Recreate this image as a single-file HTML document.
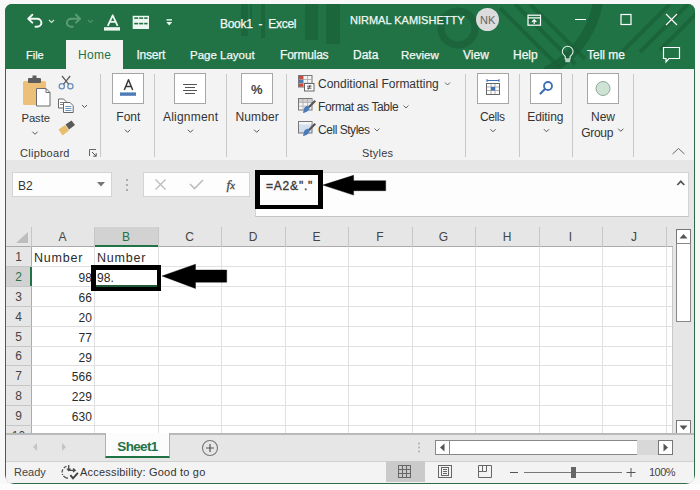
<!DOCTYPE html>
<html><head><meta charset="utf-8">
<style>
*{margin:0;padding:0;box-sizing:border-box;}
html,body{width:700px;height:490px;overflow:hidden;background:#f8f8f8;font-family:"Liberation Sans",sans-serif;}
.a{position:absolute;}
.t{position:absolute;white-space:nowrap;line-height:1;}
#win{position:absolute;left:0;top:0;width:700px;height:490px;clip-path:inset(4px 5px 6px 5px round 7px 7px 9px 9px);background:#2f6b4a;}
.wt{color:#f3f8f5;font-size:12px;-webkit-text-stroke:0.25px #f3f8f5;}
.rb{color:#333;font-size:12px;}
.sep{position:absolute;width:1px;background:#c8c8c8;top:74px;height:83px;}
.ibox{position:absolute;width:32px;height:31px;top:73px;background:#fff;border:1px solid #a6a6a6;}
.chev{position:absolute;width:5px;height:5px;border-right:1px solid #555;border-bottom:1px solid #555;transform:rotate(45deg);}
.hl{position:absolute;background:#e1e1e1;}
.rh{position:absolute;left:6px;width:25px;height:20px;color:#444;font-size:12px;text-align:center;line-height:20px;}
.ch{position:absolute;top:227px;height:19px;color:#444;font-size:12px;text-align:center;line-height:20px;}
.cell{position:absolute;font-size:12.5px;color:#2a2a2a;line-height:22px;white-space:nowrap;letter-spacing:0.8px;}
.num{font-size:12px;letter-spacing:0.1px;}
</style></head><body>
<div class="a" style="left:0;top:484px;width:700px;height:6px;background:#fcfcfc;"></div>
<div id="win">
  <div class="a" style="left:0;top:0;width:700px;height:69px;background:#217346;"></div>
  <!-- title bar pattern -->
  <svg class="a" style="left:0;top:0" width="700" height="69">
    <g fill="#195e37" opacity="0.6">
      <rect x="241" y="4" width="7" height="32"/><rect x="250" y="4" width="2" height="26"/><rect x="261" y="4" width="4" height="34"/>
      <rect x="305" y="4" width="13" height="36"/><rect x="326" y="4" width="14" height="40"/>
    </g>
    <g fill="none" stroke="#195e37" opacity="0.7">
      <circle cx="458" cy="28" r="17" stroke-width="7"/>
      <path d="M598 2 Q590 48 546 72" stroke-width="10"/>
    </g>
    <g stroke="#195e37" stroke-width="4" opacity="0.65">
      <line x1="500" y1="8" x2="560" y2="68"/><line x1="515" y1="4" x2="575" y2="64"/><line x1="530" y1="4" x2="585" y2="59"/>
      <line x1="622" y1="52" x2="670" y2="4"/><line x1="640" y1="52" x2="688" y2="4"/><line x1="660" y1="50" x2="700" y2="10"/>
    </g>
  </svg>
  <!-- QAT -->
  <svg class="a" style="left:0;top:0" width="200" height="40" viewBox="0 0 200 40">
    <path d="M32.3 14.8 L28.3 18.7 L32.3 22.6" fill="none" stroke="#f2f8f4" stroke-width="2" stroke-linejoin="round" stroke-linecap="round"/>
    <path d="M28.8 18.7 H37 A4.4 4 0 0 1 37 26.7 H35.5" fill="none" stroke="#f2f8f4" stroke-width="2" stroke-linecap="round"/>
    <path d="M49 20 L51.5 22.5 L54 20" fill="none" stroke="#cfe3d7" stroke-width="1.1"/>
    <path d="M76 14.8 L80 18.7 L76 22.6" fill="none" stroke="#5c9c77" stroke-width="2" stroke-linejoin="round" stroke-linecap="round"/>
    <path d="M79.5 18.7 H71.3 A4.4 4 0 0 0 71.3 26.7 H72.8" fill="none" stroke="#5c9c77" stroke-width="2" stroke-linecap="round"/>
    <path d="M88 20 L90.5 22.5 L93 20" fill="none" stroke="#4f9070" stroke-width="1.1"/>
    <path d="M107.8 25.8 L112.7 15.3 L117.6 25.8 M109.6 21.8 H115.8" fill="none" stroke="#eef7f1" stroke-width="1.8" stroke-linejoin="round"/>
    <rect x="104" y="27.2" width="16" height="3.4" fill="#eef7f1"/>
    <rect x="132.7" y="15.8" width="16.3" height="13.2" fill="#eef7f1"/>
    <g fill="#217346"><rect x="134.2" y="17.3" width="4" height="1.6"/><rect x="139.2" y="17.3" width="4" height="1.6"/><rect x="144.2" y="17.3" width="3.4" height="1.6"/>
    <rect x="134.2" y="22.8" width="4" height="1.6"/><rect x="139.2" y="22.8" width="4" height="1.6"/><rect x="144.2" y="22.8" width="3.4" height="1.6"/></g>
    <rect x="166.5" y="19.2" width="5.5" height="1.4" fill="#eef7f1"/>
    <path d="M166.3 22 H172.2 L169.25 25.5 Z" fill="#eef7f1"/>
  </svg>
  <div class="t wt" style="left:220px;top:18px;font-size:12px;letter-spacing:-0.3px;">Book1&nbsp; -&nbsp; Excel</div>
  <div class="t wt" style="left:350px;top:15px;font-size:11px;">NIRMAL KAMISHETTY</div>
  <div class="a" style="left:476px;top:8px;width:23px;height:23px;border-radius:50%;background:#dcdcdc;"></div>
  <div class="t" style="left:480px;top:15px;font-size:11px;color:#666;">NK</div>
  <svg class="a" style="left:520px;top:8px" width="170" height="24" viewBox="520 8 170 24">
    <rect x="528" y="15.2" width="12.5" height="10" fill="none" stroke="#fff" stroke-width="1.2"/>
    <line x1="528" y1="17.8" x2="540.5" y2="17.8" stroke="#fff" stroke-width="1.2"/>
    <path d="M534.2 24 V19.8 M532 22 L534.2 19.8 L536.4 22" fill="none" stroke="#fff" stroke-width="1.2"/>
    <line x1="575" y1="19.5" x2="586" y2="19.5" stroke="#fff" stroke-width="1.2"/>
    <rect x="621" y="14.5" width="10" height="10" fill="none" stroke="#fff" stroke-width="1.2"/>
    <path d="M666 14 L677 25 M677 14 L666 25" stroke="#fff" stroke-width="1.2"/>
  </svg>
  <!-- tabs -->
  <div class="a" style="left:66px;top:40px;width:57px;height:29px;background:#f3f3f3;"></div>
  <div class="t wt" style="left:26px;top:49.5px;font-size:11px;">File</div>
  <div class="t" style="left:78px;top:49px;font-size:12px;color:#217346;letter-spacing:0.3px;">Home</div>
  <div class="t wt" style="left:136.5px;top:49px;letter-spacing:-0.25px;">Insert</div>
  <div class="t wt" style="left:190px;top:49.5px;font-size:11.5px;">Page Layout</div>
  <div class="t wt" style="left:280px;top:49px;letter-spacing:-0.2px;">Formulas</div>
  <div class="t wt" style="left:353px;top:49px;">Data</div>
  <div class="t wt" style="left:401px;top:49.5px;font-size:11.5px;">Review</div>
  <div class="t wt" style="left:463px;top:49px;">View</div>
  <div class="t wt" style="left:513px;top:49px;">Help</div>
  <svg class="a" style="left:555px;top:43px" width="130" height="22" viewBox="555 43 130 22">
    <path d="M565.3 59 V56.5 C563 54.5 562.3 53 562.3 51.7 A5.4 5.4 0 0 1 573.1 51.7 C573.1 53 572.4 54.5 570.1 56.5 V59 Z" fill="none" stroke="#e8f3ec" stroke-width="1.1"/>
    <rect x="565.3" y="59" width="4.8" height="3.2" fill="#b9d4c4"/>
    <path d="M663.5 47.5 H679.5 V58.5 H669 L666 62 V58.5 H663.5 Z" fill="none" stroke="#fff" stroke-width="1.2"/>
  </svg>
  <div class="t wt" style="left:587px;top:49px;">Tell me</div>

  <div class="a" style="left:6px;top:69px;width:688px;height:414px;background:#e6e6e6;"></div>
  <!-- ribbon -->
  <div class="a" style="left:6px;top:69px;width:688px;height:93px;background:#f3f3f3;border-bottom:1px solid #d8d8d8;"></div>
  <!-- clipboard group -->
  <svg class="a" style="left:15px;top:70px" width="85" height="70" viewBox="15 70 85 70">
    <rect x="23" y="81" width="23" height="24" rx="1.5" fill="#edc079"/>
    <rect x="28" y="78" width="13" height="5" rx="1" fill="#5d5d5d"/>
    <rect x="32.5" y="75.5" width="4" height="3" fill="#5d5d5d"/>
    <path d="M36.5 88.5 H46 L50 92.5 V106 H36.5 Z" fill="#fff" stroke="#6b6b6b" stroke-width="1"/>
    <path d="M46 88.5 V92.5 H50" fill="none" stroke="#6b6b6b" stroke-width="1"/>
    <!-- scissors -->
    <circle cx="61.8" cy="86.3" r="2.6" fill="none" stroke="#6a8fbb" stroke-width="1.3"/>
    <circle cx="70.4" cy="86.3" r="2.6" fill="none" stroke="#6a8fbb" stroke-width="1.3"/>
    <path d="M63.6 84.2 L70.2 76 M68.6 84.2 L62 76" stroke="#5a5a5a" stroke-width="1.2"/>
    <!-- copy -->
    <path d="M58.5 99 H63.5 L66 101.5 V108 H58.5 Z" fill="#fff" stroke="#666" stroke-width="1"/>
    <path d="M60 102.5 H63.5 M60 104.5 H63.5" stroke="#777" stroke-width="0.9"/>
    <path d="M63.5 102.5 H70 L73.2 105.7 V112.5 H63.5 Z" fill="#fff" stroke="#666" stroke-width="1"/>
    <path d="M65.3 106.5 H71.5 M65.3 108.5 H71.5 M65.3 110.5 H71.5" stroke="#5b86b8" stroke-width="0.9"/>
    <path d="M82 105 L84.5 107.5 L87 105" fill="none" stroke="#555" stroke-width="1"/>
    <!-- format painter -->
    <path d="M58.5 129.5 L65 125 L69 130.5 L62.5 135.5 Z" fill="#e9bd6e"/>
    <path d="M65.5 124.5 L71.5 120.5 L75 125 L69 129.5 Z" fill="#5a5a5a"/>
  </svg>
  <div class="t rb" style="left:21.5px;top:112.5px;font-size:11.3px;letter-spacing:-0.1px;">Paste</div>
  <div class="t rb" style="left:20px;top:148px;font-size:11px;color:#3a3a3a;letter-spacing:0.3px;">Clipboard</div>
  <svg class="a" style="left:88px;top:148px" width="10" height="10" viewBox="88 148 10 10"><path d="M89.5 156 V149.5 H96" fill="none" stroke="#666" stroke-width="1"/><path d="M92 152 L96.2 156.2 M96.2 153.2 V156.2 H93.2" fill="none" stroke="#555" stroke-width="1"/></svg>
  <div class="sep" style="left:100px;"></div>

  <!-- Font -->
  <div class="ibox" style="left:112px;"></div>
  <svg class="a" style="left:112px;top:73px" width="32" height="31"><path d="M12.3 17 L16.5 6.8 L20.7 17 M13.7 13.6 H19.3" fill="none" stroke="#3a3a3a" stroke-width="1.5" stroke-linejoin="round"/><rect x="8" y="19.4" width="16" height="3.4" fill="#4f7cb8"/></svg>
  <div class="t rb" style="left:116.3px;top:111px;">Font</div>
  <div class="sep" style="left:154px;"></div>

  <!-- Alignment -->
  <div class="ibox" style="left:174px;"></div>
  <svg class="a" style="left:174px;top:73px" width="32" height="31"><g stroke="#555" stroke-width="1"><line x1="9" y1="11.5" x2="23" y2="11.5"/><line x1="11" y1="14.5" x2="21" y2="14.5"/><line x1="9" y1="17.5" x2="23" y2="17.5"/><line x1="11" y1="20.5" x2="21" y2="20.5"/></g></svg>
  <div class="t rb" style="left:163px;top:111px;letter-spacing:0.2px;">Alignment</div>
  <div class="sep" style="left:226px;"></div>

  <!-- Number -->
  <div class="ibox" style="left:241px;"></div>
  <div class="t" style="left:251px;top:83px;font-size:13px;font-weight:bold;color:#444;letter-spacing:-0.5px;">%</div>
  <div class="t rb" style="left:235.4px;top:111px;letter-spacing:0.15px;">Number</div>
  <div class="sep" style="left:286px;"></div>

  <!-- Styles -->
  <svg class="a" style="left:296px;top:74px" width="20" height="64" viewBox="296 74 20 64">
    <rect x="298.5" y="75.5" width="13.5" height="11.5" fill="#f4f4f4" stroke="#777" stroke-width="1"/>
    <path d="M303 76 V87 M307.5 76 V87 M299 79.5 H312 M299 83.2 H312" stroke="#aaa" stroke-width="0.8"/>
    <rect x="299" y="76" width="4.3" height="3.3" fill="#cf4a3b"/>
    <rect x="299" y="79.8" width="4.3" height="3.2" fill="#4a7ab8"/>
    <rect x="299" y="83.5" width="4.3" height="3.3" fill="#cf4a3b"/>
    <rect x="304.5" y="83.5" width="9.5" height="7.5" fill="#fff" stroke="#666" stroke-width="1"/>
    <path d="M307 86.2 H311.5 M307 88.2 H311.5 M308.3 89.6 L310.2 84.8" stroke="#333" stroke-width="0.8"/>
    <rect x="298.5" y="98.5" width="13.5" height="11.5" fill="#f4f4f4" stroke="#777" stroke-width="1"/>
    <rect x="299" y="99" width="12.5" height="3" fill="#cfcfcf"/>
    <path d="M303 99 V110 M307.5 99 V110 M299 102.5 H312 M299 106.2 H312" stroke="#aaa" stroke-width="0.8"/>
    <path d="M308 106.5 L314.5 100 L316 101.5 L309.5 108 Z" fill="#555"/>
    <path d="M304 108.5 C305 106.5 307 105.5 308.5 106 L309.5 107.5 C309.5 110 307 112.5 303 113 Z" fill="#4a7ab8"/>
    <rect x="298.5" y="121.5" width="13.5" height="11.5" fill="#d3deee" stroke="#777" stroke-width="1"/>
    <rect x="299" y="122" width="12.5" height="2.5" fill="#f4f4f4"/>
    <path d="M308 129.5 L314.5 123 L316 124.5 L309.5 131 Z" fill="#555"/>
    <path d="M304 131.5 C305 129.5 307 128.5 308.5 129 L309.5 130.5 C309.5 133 307 135.5 303 136 Z" fill="#4a7ab8"/>
  </svg>
  <div class="t rb" style="left:318px;top:78px;">Conditional Formatting</div>
  <div class="t rb" style="left:318px;top:101px;letter-spacing:-0.37px;">Format as Table</div>
  <div class="t rb" style="left:318px;top:124px;letter-spacing:-0.46px;">Cell Styles</div>
  <svg class="a" style="left:370px;top:78px" width="90" height="60" viewBox="370 78 90 60">
    <path d="M445 82.5 L447.5 85 L450 82.5" fill="none" stroke="#666" stroke-width="1"/>
    <path d="M403.5 105.5 L406 108 L408.5 105.5" fill="none" stroke="#666" stroke-width="1"/>
    <path d="M374.5 128.5 L377 131 L379.5 128.5" fill="none" stroke="#666" stroke-width="1"/>
  </svg>
  <div class="t rb" style="left:362px;top:148px;font-size:11px;color:#3a3a3a;letter-spacing:0.2px;">Styles</div>
  <div class="sep" style="left:465px;"></div>

  <!-- Cells -->
  <div class="ibox" style="left:477px;"></div>
  <svg class="a" style="left:477px;top:73px" width="32" height="31"><rect x="9.5" y="10.5" width="13" height="11" fill="#fff" stroke="#666" stroke-width="1"/><g stroke="#999" stroke-width="0.8"><line x1="10" y1="14" x2="22" y2="14"/><line x1="10" y1="17.5" x2="22" y2="17.5"/><line x1="14" y1="11" x2="14" y2="21"/><line x1="18" y1="11" x2="18" y2="21"/></g><rect x="14" y="14" width="4" height="3.5" fill="#3f6fb6"/><path d="M10 7.5 H22 M10 6 V9 M22 6 V9" stroke="#3f6fb6" stroke-width="1"/></svg>
  <div class="t rb" style="left:480px;top:110.5px;letter-spacing:-0.4px;">Cells</div>
  <div class="sep" style="left:519px;"></div>

  <!-- Editing -->
  <div class="ibox" style="left:530px;"></div>
  <svg class="a" style="left:530px;top:73px" width="32" height="31"><circle cx="18" cy="13" r="4" fill="none" stroke="#3f6fb6" stroke-width="1.8"/><line x1="15" y1="16" x2="10.5" y2="20.5" stroke="#3f6fb6" stroke-width="2.2" stroke-linecap="round"/></svg>
  <div class="t rb" style="left:527.3px;top:110.5px;letter-spacing:-0.1px;">Editing</div>
  <div class="sep" style="left:572px;"></div>

  <!-- New Group -->
  <div class="ibox" style="left:587px;"></div>
  <svg class="a" style="left:587px;top:73px" width="32" height="31"><circle cx="16" cy="15.5" r="7" fill="#cfe3d5" stroke="#8fa89a" stroke-width="1"/></svg>
  <div class="t rb" style="left:591px;top:111px;">New</div>
  <div class="t rb" style="left:581.2px;top:126.5px;letter-spacing:-0.3px;">Group</div>
  <div class="sep" style="left:633px;"></div>
  <svg class="a" style="left:670px;top:146px" width="18" height="10"><path d="M2.5 8 L8.5 2.5 L14.5 8" fill="none" stroke="#666" stroke-width="1"/></svg>

  <svg class="a" style="left:0;top:120px" width="700" height="20" viewBox="0 120 700 20"><g fill="none" stroke="#555" stroke-width="1"><path d="M32.4 131.7 L35.0 134.3 L37.6 131.7"/><path d="M125.0 129.7 L127.6 132.3 L130.2 129.7"/><path d="M187.8 129.7 L190.4 132.3 L193.0 129.7"/><path d="M254.1 129.7 L256.7 132.3 L259.3 129.7"/><path d="M490.4 129.2 L493.0 131.8 L495.6 129.2"/><path d="M543.9 129.2 L546.5 131.8 L549.1 129.2"/><path d="M618.2 128.7 L620.8 131.3 L623.4 128.7"/></g></svg>
  <!-- formula bar region -->
  <div class="a" style="left:6px;top:160px;width:688px;height:67px;background:#e6e6e6;"></div>
  <div class="a" style="left:12px;top:172px;width:100px;height:25px;background:#fdfdfd;border:1px solid #d4d4d4;"></div>
  <div class="t" style="left:18px;top:180px;font-size:12px;color:#333;">B2</div>
  <svg class="a" style="left:97px;top:182px" width="9" height="5"><path d="M0 0 H8 L4 4.5 Z" fill="#777"/></svg>
  <svg class="a" style="left:125px;top:178px" width="4" height="14"><circle cx="2" cy="2" r="1" fill="#999"/><circle cx="2" cy="7" r="1" fill="#999"/><circle cx="2" cy="12" r="1" fill="#999"/></svg>
  <div class="a" style="left:143px;top:172px;width:107px;height:25px;background:#fdfdfd;border:1px solid #d4d4d4;"></div>
  <svg class="a" style="left:143px;top:172px" width="107" height="25" viewBox="143 172 107 25">
    <path d="M155.5 179.5 L165.5 189.5 M165.5 179.5 L155.5 189.5" stroke="#bdbdbd" stroke-width="1.4"/>
    <path d="M190 184 L194.5 188.5 L203 180" fill="none" stroke="#bdbdbd" stroke-width="1.6"/>
  </svg>
  <div class="t" style="left:226.5px;top:178px;font-family:'Liberation Serif',serif;font-style:italic;font-size:13.5px;color:#4a4a4a;-webkit-text-stroke:0.3px #4a4a4a;">f<span style="font-size:10.5px;letter-spacing:-0.5px;">x</span></div>
  <div class="a" style="left:255px;top:172px;width:434px;height:45px;background:#fdfdfd;border:1px solid #d4d4d4;border-bottom-color:#c4c4c4;"></div>
  <svg class="a" style="left:675px;top:178px" width="12" height="10"><path d="M2.3 7 L5.8 3.3 L9.3 7" fill="none" stroke="#555" stroke-width="1.7"/></svg>
  <div class="a" style="left:255px;top:170px;width:68px;height:39px;border:solid #000;border-width:5px 5px 4px 5px;"></div>
  <div class="t" style="left:266px;top:180px;font-size:12px;color:#3c3c3c;letter-spacing:0.8px;-webkit-text-stroke:0.35px #3c3c3c;">=A2&amp;"."</div>
  <svg class="a" style="left:320px;top:170px" width="70" height="30" viewBox="320 170 70 30"><path d="M322.8 185.1 L353.6 175.3 V180.7 H385.7 V190.7 H353.6 V195.1 Z" fill="#000" stroke="#000" stroke-width="0.4" stroke-linejoin="round"/></svg>

  <!-- column headers -->
  <div class="a" style="left:6px;top:227px;width:667px;height:20px;background:#e6e6e6;border-bottom:1px solid #ababab;"></div>
  <svg class="a" style="left:6px;top:227px" width="26" height="20"><path d="M22 5 V16 H10 Z" fill="#bdbdbd"/></svg>
  <div class="a" style="left:94px;top:227px;width:64px;height:20px;background:#d2d2d2;border-bottom:2px solid #217346;"></div>
  <div class="ch" style="left:31px;width:63px;color:#444;">A</div>
  <div class="ch" style="left:94px;width:64px;color:#217346;">B</div>
  <div class="ch" style="left:158px;width:63px;color:#444;">C</div>
  <div class="ch" style="left:221px;width:64px;color:#444;">D</div>
  <div class="ch" style="left:285px;width:63px;color:#444;">E</div>
  <div class="ch" style="left:348px;width:64px;color:#444;">F</div>
  <div class="ch" style="left:412px;width:63px;color:#444;">G</div>
  <div class="ch" style="left:475px;width:64px;color:#444;">H</div>
  <div class="ch" style="left:539px;width:63px;color:#444;">I</div>
  <div class="ch" style="left:602px;width:64px;color:#444;">J</div>
  <div class="a" style="left:31px;top:227px;width:1px;height:20px;background:#c6c6c6;"></div>
  <div class="a" style="left:94px;top:227px;width:1px;height:20px;background:#c6c6c6;"></div>
  <div class="a" style="left:158px;top:227px;width:1px;height:20px;background:#c6c6c6;"></div>
  <div class="a" style="left:221px;top:227px;width:1px;height:20px;background:#c6c6c6;"></div>
  <div class="a" style="left:285px;top:227px;width:1px;height:20px;background:#c6c6c6;"></div>
  <div class="a" style="left:348px;top:227px;width:1px;height:20px;background:#c6c6c6;"></div>
  <div class="a" style="left:412px;top:227px;width:1px;height:20px;background:#c6c6c6;"></div>
  <div class="a" style="left:475px;top:227px;width:1px;height:20px;background:#c6c6c6;"></div>
  <div class="a" style="left:539px;top:227px;width:1px;height:20px;background:#c6c6c6;"></div>
  <div class="a" style="left:602px;top:227px;width:1px;height:20px;background:#c6c6c6;"></div>
  <div class="a" style="left:666px;top:227px;width:1px;height:20px;background:#c6c6c6;"></div>
  <!-- grid -->
  <div class="a" style="left:31px;top:247px;width:641px;height:186px;background:#fff;"></div>
  <div class="hl" style="left:94px;top:247px;width:1px;height:186px;"></div>
  <div class="hl" style="left:158px;top:247px;width:1px;height:186px;"></div>
  <div class="hl" style="left:221px;top:247px;width:1px;height:186px;"></div>
  <div class="hl" style="left:285px;top:247px;width:1px;height:186px;"></div>
  <div class="hl" style="left:348px;top:247px;width:1px;height:186px;"></div>
  <div class="hl" style="left:412px;top:247px;width:1px;height:186px;"></div>
  <div class="hl" style="left:475px;top:247px;width:1px;height:186px;"></div>
  <div class="hl" style="left:539px;top:247px;width:1px;height:186px;"></div>
  <div class="hl" style="left:602px;top:247px;width:1px;height:186px;"></div>
  <div class="hl" style="left:666px;top:247px;width:1px;height:186px;"></div>
  <div class="a" style="left:672px;top:247px;width:1px;height:186px;background:#c8c8c8;"></div>
  <div class="hl" style="left:31px;top:266px;width:641px;height:1px;"></div>
  <div class="hl" style="left:31px;top:286px;width:641px;height:1px;"></div>
  <div class="hl" style="left:31px;top:306px;width:641px;height:1px;"></div>
  <div class="hl" style="left:31px;top:326px;width:641px;height:1px;"></div>
  <div class="hl" style="left:31px;top:346px;width:641px;height:1px;"></div>
  <div class="hl" style="left:31px;top:365px;width:641px;height:1px;"></div>
  <div class="hl" style="left:31px;top:385px;width:641px;height:1px;"></div>
  <div class="hl" style="left:31px;top:405px;width:641px;height:1px;"></div>
  <div class="hl" style="left:31px;top:425px;width:641px;height:1px;"></div>
  <!-- row headers -->
  <div class="a" style="left:6px;top:247px;width:26px;height:186px;background:#e6e6e6;border-right:1px solid #ababab;"></div>
  <div class="a" style="left:6px;top:267px;width:26px;height:19px;background:#d2d2d2;border-right:2px solid #217346;"></div>
  <div class="rh" style="top:247px;height:19px;line-height:20px;color:#444;">1</div>
  <div class="a" style="left:6px;top:266px;width:26px;height:1px;background:#c6c6c6;"></div>
  <div class="rh" style="top:267px;height:19px;line-height:20px;color:#217346;">2</div>
  <div class="a" style="left:6px;top:286px;width:26px;height:1px;background:#c6c6c6;"></div>
  <div class="rh" style="top:287px;height:19px;line-height:20px;color:#444;">3</div>
  <div class="a" style="left:6px;top:306px;width:26px;height:1px;background:#c6c6c6;"></div>
  <div class="rh" style="top:307px;height:19px;line-height:20px;color:#444;">4</div>
  <div class="a" style="left:6px;top:326px;width:26px;height:1px;background:#c6c6c6;"></div>
  <div class="rh" style="top:327px;height:19px;line-height:20px;color:#444;">5</div>
  <div class="a" style="left:6px;top:346px;width:26px;height:1px;background:#c6c6c6;"></div>
  <div class="rh" style="top:347px;height:18px;line-height:19px;color:#444;">6</div>
  <div class="a" style="left:6px;top:365px;width:26px;height:1px;background:#c6c6c6;"></div>
  <div class="rh" style="top:366px;height:19px;line-height:20px;color:#444;">7</div>
  <div class="a" style="left:6px;top:385px;width:26px;height:1px;background:#c6c6c6;"></div>
  <div class="rh" style="top:386px;height:19px;line-height:20px;color:#444;">8</div>
  <div class="a" style="left:6px;top:405px;width:26px;height:1px;background:#c6c6c6;"></div>
  <div class="rh" style="top:406px;height:19px;line-height:20px;color:#444;">9</div>
  <div class="a" style="left:6px;top:425px;width:26px;height:1px;background:#c6c6c6;"></div>
  <div class="rh" style="top:426px;height:19px;line-height:20px;color:#444;">10</div>

  <!-- cells -->
  <div class="cell" style="left:34px;top:247px;">Number</div>
  <div class="cell" style="left:97px;top:247px;">Number</div>
  <div class="cell num" style="left:31px;top:267px;width:61px;text-align:right;">98</div>
  <div class="cell num" style="left:31px;top:287px;width:61px;text-align:right;">66</div>
  <div class="cell num" style="left:31px;top:307px;width:61px;text-align:right;">20</div>
  <div class="cell num" style="left:31px;top:327px;width:61px;text-align:right;">77</div>
  <div class="cell num" style="left:31px;top:347px;width:61px;text-align:right;">29</div>
  <div class="cell num" style="left:31px;top:366px;width:61px;text-align:right;">566</div>
  <div class="cell num" style="left:31px;top:386px;width:61px;text-align:right;">229</div>
  <div class="cell num" style="left:31px;top:406px;width:61px;text-align:right;">630</div>

  <div class="a" style="left:95px;top:285px;width:63px;height:1.5px;background:#1d5a35;"></div>
  <div class="cell num" style="left:97px;top:267px;">98.</div>
  <div class="a" style="left:91px;top:265px;width:70px;height:26px;border:solid #000;border-width:5px 4px 4px 5px;"></div>
  <svg class="a" style="left:160px;top:262px" width="70" height="30" viewBox="160 262 70 30"><path d="M162 276 L195.5 264.2 V270 H226.7 V282.2 H195.5 V288.5 Z" fill="#000" stroke="#000" stroke-width="0.4" stroke-linejoin="round"/></svg>

  <!-- vertical scrollbar -->
  <div class="a" style="left:673px;top:227px;width:21px;height:207px;background:#e6e6e6;"></div>
  <div class="a" style="left:676px;top:229px;width:15px;height:15px;background:#fff;border:1px solid #777;"></div>
  <svg class="a" style="left:676px;top:229px" width="15" height="15"><path d="M3.5 9.5 H11.5 L7.5 5 Z" fill="#555"/></svg>
  <div class="a" style="left:676px;top:243px;width:15px;height:79px;background:#fff;border:1px solid #888;"></div>
  <div class="a" style="left:676px;top:420px;width:15px;height:15px;background:#fff;border:1px solid #777;"></div>
  <svg class="a" style="left:676px;top:420px" width="15" height="15"><path d="M3.5 5.5 H11.5 L7.5 10 Z" fill="#555"/></svg>

  <!-- sheet tab bar -->
  <div class="a" style="left:6px;top:433px;width:688px;height:28px;background:#e6e6e6;border-top:2px solid #b9b9b9;"></div>
  <svg class="a" style="left:30px;top:441px" width="40" height="12"><path d="M7 2 L3 6 L7 10 Z" fill="#c4c4c4"/><path d="M32 2 L36 6 L32 10 Z" fill="#c4c4c4"/></svg>
  <div class="a" style="left:105px;top:433px;width:65px;height:25px;background:#fcfcfc;border:1px solid #b0b0b0;border-top:none;border-bottom:2px solid #217346;"></div>
  <div class="t" style="left:117.3px;top:440px;font-size:13.5px;font-weight:bold;color:#217346;letter-spacing:-0.65px;">Sheet1</div>
  <svg class="a" style="left:201px;top:439px" width="18" height="18"><circle cx="9" cy="9" r="7.5" fill="none" stroke="#777" stroke-width="1.1"/><path d="M9 5 V13 M5 9 H13" stroke="#555" stroke-width="1.2"/></svg>
  <svg class="a" style="left:417px;top:442px" width="4" height="11"><circle cx="2" cy="1.5" r="0.9" fill="#aaa"/><circle cx="2" cy="5.5" r="0.9" fill="#aaa"/><circle cx="2" cy="9.5" r="0.9" fill="#aaa"/></svg>
  <div class="a" style="left:435px;top:440px;width:203px;height:15px;background:#fff;border:1px solid #888;"></div>
  <div class="a" style="left:449px;top:440px;width:1px;height:15px;background:#888;"></div>
  <svg class="a" style="left:435px;top:440px" width="15" height="15"><path d="M9.5 3.5 V11.5 L5 7.5 Z" fill="#555"/></svg>
  <div class="a" style="left:637px;top:440px;width:22px;height:15px;background:#d8d8d8;"></div>
  <div class="a" style="left:658px;top:440px;width:15px;height:15px;background:#fff;border:1px solid #777;"></div>
  <svg class="a" style="left:658px;top:440px" width="15" height="15"><path d="M5.5 3.5 V11.5 L10 7.5 Z" fill="#555"/></svg>

  <!-- status bar -->
  <div class="a" style="left:6px;top:461px;width:688px;height:22px;background:#f3f3f3;border-top:1px solid #d0d0d0;"></div>
  <div class="t" style="left:14px;top:467px;font-size:11px;color:#444;">Ready</div>
  <svg class="a" style="left:55px;top:460px" width="26" height="24" viewBox="55 460 26 24">
    <path d="M66.5 466.3 A6.3 6.3 0 0 0 62.7 475 " fill="none" stroke="#5a5a5a" stroke-width="1.4" stroke-dasharray="3.2 1.6"/>
    <path d="M63.5 476 A6.3 6.3 0 0 0 68 478.2" fill="none" stroke="#5a5a5a" stroke-width="1.4"/>
    <path d="M68.7 465 V470.5 M67 468.6 L68.7 470.6 L70.4 468.6 M68.7 470.3 H75 M73 468.6 L75.2 470.3 L73 472" fill="none" stroke="#4a4a4a" stroke-width="1.3"/>
    <path d="M70.4 475.2 L73 478.3 L77.9 472.8" fill="none" stroke="#3f3f3f" stroke-width="1.9"/>
  </svg>
  <div class="t" style="left:80px;top:467px;font-size:11px;color:#333;letter-spacing:0.2px;">Accessibility: Good to go</div>
  <div class="a" style="left:386px;top:461px;width:39px;height:21px;background:#cacaca;"></div>
  <svg class="a" style="left:380px;top:462px" width="300" height="20" viewBox="380 462 300 20">
    <g fill="none" stroke="#666" stroke-width="1"><rect x="398.5" y="465.5" width="12" height="12"/><path d="M402.5 465.5 V477.5 M406.5 465.5 V477.5 M398.5 469.5 H410.5 M398.5 473.5 H410.5"/></g>
    <g fill="none" stroke="#666" stroke-width="1"><rect x="438.5" y="465.5" width="13" height="12"/><rect x="441.5" y="467.5" width="7" height="8"/><path d="M443 469.5 H447 M443 471.5 H447 M443 473.5 H447"/></g>
    <g fill="none" stroke="#666" stroke-width="1"><path d="M478.5 465.5 H491.5 V477.5 H478.5 Z M482.5 465.5 V471.5 H478.5 M486.5 465.5 V471.5 H482.5"/></g>
    <line x1="510" y1="472.5" x2="518" y2="472.5" stroke="#555" stroke-width="1.2"/>
    <line x1="524" y1="472.5" x2="622" y2="472.5" stroke="#777" stroke-width="1.2"/>
    <rect x="571" y="467" width="5" height="11" fill="#666"/>
    <path d="M626.5 472.5 H635.5 M631 468 V477" stroke="#555" stroke-width="1"/>
  </svg>
  <div class="t" style="left:649px;top:467px;font-size:11px;color:#444;letter-spacing:-0.5px;">100%</div>
</div>
</body></html>
